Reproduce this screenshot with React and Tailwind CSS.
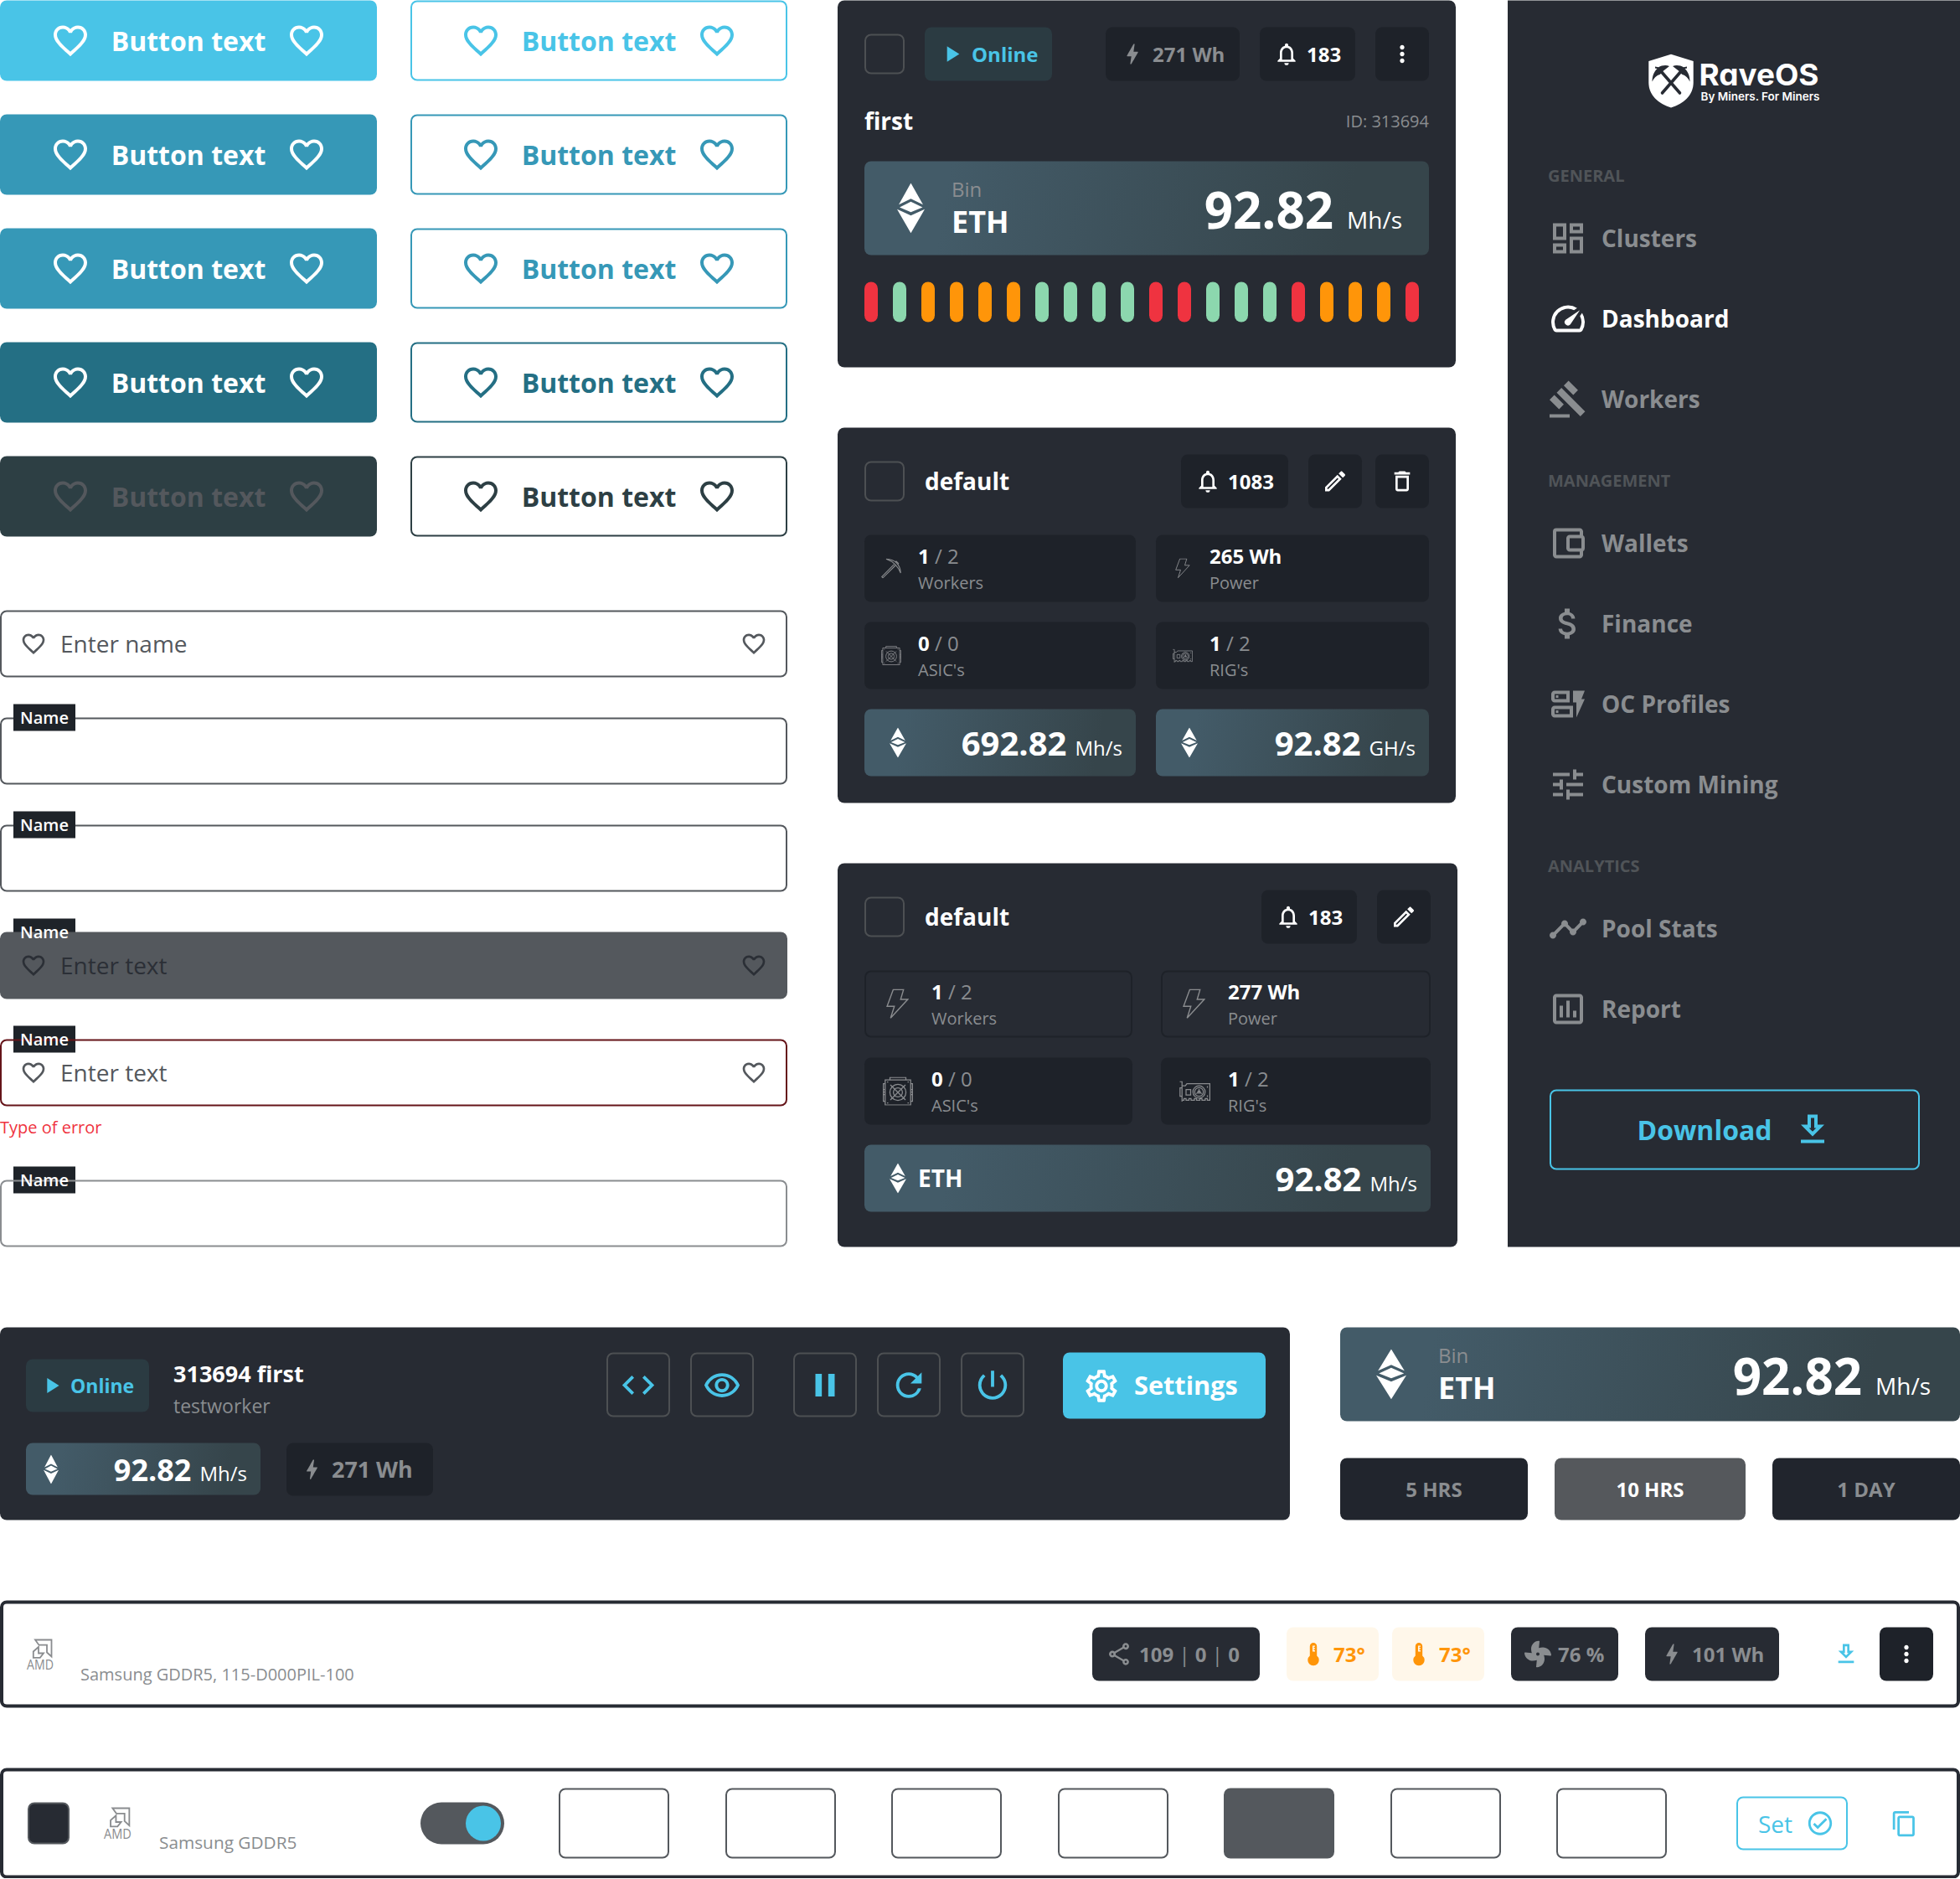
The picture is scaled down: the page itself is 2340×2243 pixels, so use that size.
import {
  MdFavoriteBorder,
  MdPlayArrow,
  MdBolt,
  MdNotificationsNone,
  MdMoreVert,
  MdOutlineEdit,
  MdDeleteOutline,
  MdOutlineDashboard,
  MdSpeed,
  MdGavel,
  MdAttachMoney,
  MdOutlineDynamicForm,
  MdTune,
  MdTimeline,
  MdOutlineAssessment,
  MdCode,
  MdOutlineRemoveRedEye,
  MdPause,
  MdRefresh,
  MdPowerSettingsNew,
  MdOutlineSettings,
  MdOutlineShare,
  MdContentCopy,
  MdOutlineCheckCircle,
} from "react-icons/md";
import { FaFan } from "react-icons/fa";

/* ---------- custom drawings ---------- */

function EthIcon({ className }) {
  return (
    <svg viewBox="0 0 32.5 60" preserveAspectRatio="none" fill="#fff" className={className}>
      <path d="M16.2 0 30.5 25.7 16.2 18.7 2 25.7Z" />
      <path d="M16.2 22.3 30 29 16.2 34.7 3 29Z" />
      <path d="M0 31.3 16.2 38.7 32.5 31.3 16.2 59.8Z" />
    </svg>
  );
}

function DownloadIcon({ className }) {
  return (
    <svg viewBox="0 0 24 24" fill="currentColor" className={className}>
      <path d="M19 9h-4V3H9v6H5l7 7 7-7zm-8 2V5h2v6h1.17L12 13.17 9.83 11H11zm-6 7h14v2H5z" />
    </svg>
  );
}

function WalletIcon({ className }) {
  return (
    <svg viewBox="0 0 24 24" fill="currentColor" className={className}>
      <path d="M21 7.28V5c0-1.1-.9-2-2-2H5a2 2 0 0 0-2 2v14c0 1.1.9 2 2 2h14c1.1 0 2-.9 2-2v-2.28A2 2 0 0 0 22 15V9a2 2 0 0 0-1-1.72zM20 9v6h-7V9h7zM5 19V5h14v2h-6c-1.1 0-2 .9-2 2v6c0 1.1.9 2 2 2h6v2H5z" />
    </svg>
  );
}

function ThermoIcon({ className }) {
  return (
    <svg viewBox="0 0 32 32" fill="currentColor" className={className}>
      <path
        fillRule="evenodd"
        d="M16 2.500a4.200 4.200 0 0 0-4.200 4.200v11.200a6.700 6.700 0 1 0 8.400 0V6.700A4.200 4.200 0 0 0 16 2.500ZM15 6h3v1.300h-1.500v1.500H18v1.300h-1.500v1.500H18V13h-3Z"
      />
    </svg>
  );
}

function PickIcon({ className }) {
  return (
    <svg viewBox="0 0 24 24" fill="none" stroke="#8a8c8f" strokeWidth="1.1" className={className}>
      <path d="M6 .7C12 1.2 16.5 3.5 18.5 5.5c2.2 2.3 4.5 6.5 4.8 12C21.5 13 19.5 10 16.8 7.3 14 4.5 11 2.5 6 .7Z" />
      <path d="M15.5 7.2.7 22l1.3 1.3L17 8.5" />
      <path d="m17 4.5 1-1 2.6 2.6-1 1" />
    </svg>
  );
}

function BoltOutline({ className }) {
  return (
    <svg viewBox="0 0 26.5 36" fill="none" stroke="#8a8c8f" strokeWidth="1.4" className={className}>
      <path d="M8.2.8h12.300L17 12.500h8.500L5 34.800l4.500-14.100H.8Z" />
    </svg>
  );
}

function AsicIcon({ className }) {
  return (
    <svg viewBox="0 0 36 34" fill="none" stroke="#8a8c8f" strokeWidth="1.25" className={className}>
      <path d="M2.800 3.500h30.400v30H2.800zM8.500 3.500V.6h19v2.900M2.800 8H.6v21h2.200M33.200 8h2.200v21h-2.200" />
      <path d="M5 6h1.500M29.500 6H31M5 31h1.500M29.500 31H31M.6 15h2M.6 18h2M.6 21h2M33.400 15h2M33.400 18h2M33.400 21h2" />
      <circle cx="18" cy="18.500" r="9.600" />
      <circle cx="18" cy="18.500" r="5.400" />
      <path d="m9 9.500 18 18M27 9.500l-18 18" />
    </svg>
  );
}

function GpuIcon({ className }) {
  return (
    <svg viewBox="0 0 37 25" fill="none" stroke="#8a8c8f" strokeWidth="1.25" className={className}>
      <path d="M.5.6h2.700V24.500M3.200 8H.8v10h2.400" />
      <path d="M3.200 5.600h4L9 3.200h27.400v19.600h-3v-2h-2.500v2H27v-2h-2.500v2h-4v-2H18v2h-4v-2h-2.500v2H8v-2H5.500v2H3.200" />
      <path d="M8 10h5.500v6.500H8z" />
      <circle cx="23.500" cy="13" r="7.300" />
      <circle cx="23.500" cy="13" r="5.200" />
      <path d="M23.500 13V9.500M23.500 13l-3.200 2M23.500 13l3.200 2M33.500 6v2M33.500 17v2" />
      <circle cx="23.500" cy="13" r="1.500" />
    </svg>
  );
}

function AmdIcon({ className }) {
  return (
    <svg viewBox="0 0 32 37" fill="none" stroke="#8a8c8f" strokeWidth="1.8" className={`overflow-visible ${className}`}>
      <path d="M10 1h19.500v20l-5.500-5V7.200h-9.500Z" />
      <path d="M14 9.500 7.800 15v7.300h8L20 17h-6Z" />
      <text x="0" y="36.600" fontFamily="Open Sans" fontSize="15.500" fontWeight="500" textLength="32" lengthAdjust="spacingAndGlyphs" fill="#8a8c8f" stroke="none">
        AMD
      </text>
    </svg>
  );
}

function Logo() {
  return (
    <svg viewBox="0 0 206 64" className="h-16 w-[206px] overflow-visible">
      <path d="M27 .3 53.700 8.500V34c0 15-11.700 25.500-26.700 30C12 59.500.3 49 .3 34V8.500Z" fill="#fff" />
      <g fill="none" stroke="#272b33" strokeWidth="3.600" strokeLinecap="round">
        <path d="m16.500 46.500 23-26.500M37.500 46.500l-23-26.500" />
      </g>
      <g fill="#272b33">
        <path d="M4.500 33C4.500 26 7 20.500 10.500 17.500l-2.500-.5V15l4 .8C16 13.500 21 12.800 25 14.500l-8 6.300-3 3.400C9.500 25.500 6.500 28.500 4.500 33Z" />
        <path d="M49.500 33c0-7-2.500-12.500-6-15.500l2.500-.5V15l-4 .8C38 13.500 33 12.800 29 14.500l8 6.300 3 3.400C44.500 25.500 47.500 28.500 49.500 33Z" />
      </g>
      <text x="60.500" y="37.200" fill="#fff" fontFamily="Inter" fontWeight="700" fontSize="35.500" textLength="143" lengthAdjust="spacingAndGlyphs" className="[font-feature-settings:'cv11']">
        RaveOS
      </text>
      <text x="62.500" y="55" fill="#fff" fontFamily="Inter" fontWeight="600" fontSize="13.300" textLength="142" lengthAdjust="spacingAndGlyphs">
        By Miners. For Miners
      </text>
    </svg>
  );
}

/* ---------- buttons and fields ---------- */

function Button({ className }) {
  return (
    <button className={`flex h-24 w-[450px] items-center justify-center gap-6 rounded-lg text-[32px] font-bold ${className}`}>
      <MdFavoriteBorder className="size-12" />
      <span className="w-[186px]">Button text</span>
      <MdFavoriteBorder className="size-12" />
    </button>
  );
}

function Field({ label, text, lineOnTop, className = "border-[#54585d] text-[#54585d]" }) {
  return (
    <div className="relative">
      {label && <div className={`absolute -top-4 left-4 h-8 w-[74px] bg-[#1e2329] ${lineOnTop ? "" : "z-10"}`} />}
      <div className={`relative flex h-20 items-center rounded-lg border-2 px-[22px] text-[28px] ${className}`}>
        {text && (
          <>
            <MdFavoriteBorder className="size-8" />
            <span className="ml-4 flex-1 pb-0.5">{text}</span>
            <MdFavoriteBorder className="size-8" />
          </>
        )}
      </div>
      {label && (
        <div className="absolute -top-4 left-4 z-20 h-8 w-[74px] text-center text-[20px] leading-8 font-semibold text-white">
          {label}
        </div>
      )}
    </div>
  );
}

/* ---------- cards ---------- */

function Checkbox() {
  return <div className="size-12 shrink-0 rounded-lg border-2 border-[#4d5053]" />;
}

function Chip({ icon: Icon, children, className }) {
  return (
    <div className={`flex h-16 items-center gap-2 rounded-lg px-4 text-[24px] font-bold ${className}`}>
      <Icon className="size-8 shrink-0" />
      {children && <span className="whitespace-nowrap">{children}</span>}
    </div>
  );
}

function Rate({ value, unit, big }) {
  return big ? (
    <div className="ml-auto flex items-baseline gap-4 pt-0.5">
      <span className="text-[60px] leading-[82px] font-bold">{value}</span>
      <span className="text-[28px]">{unit}</span>
    </div>
  ) : (
    <div className="ml-auto flex items-baseline gap-[10px]">
      <span className="text-[40px] leading-[54px] font-bold">{value}</span>
      <span className="text-[24px]">{unit}</span>
    </div>
  );
}

const gradient = "bg-linear-[100deg,#435b68_15%,#36454b_85%]";

function Stat({ icon: Icon, iconClass, boxClass, strong, rest, label, className }) {
  return (
    <div className={`flex h-20 items-center gap-4 rounded-lg ${className}`}>
      <div className={`flex items-center justify-center ${boxClass}`}>
        <Icon className={iconClass} />
      </div>
      <div className="flex flex-col pt-0.5 text-[#8a8d90]">
        <div className="text-[24px] leading-8">
          <span className="font-bold text-white">{strong}</span>
          {rest}
        </div>
        <div className="text-[20px] leading-8">{label}</div>
      </div>
    </div>
  );
}

const barColors = {
  r: "bg-[#ef3340]",
  g: "bg-[#8cd7ae]",
  o: "bg-[#ff9509]",
};

function WorkerCard() {
  return (
    <div className="flex h-[438px] w-[738px] flex-col rounded-lg bg-[#272b33] p-8 text-white">
      <div className="flex items-center gap-6">
        <Checkbox />
        <Chip icon={MdPlayArrow} className="w-[152px] bg-[#2b3b42] text-[#49c4e7]">Online</Chip>
        <Chip icon={MdBolt} className="ml-auto w-40 bg-[#1e2229] text-[#8a8d90]">271 Wh</Chip>
        <Chip icon={MdNotificationsNone} className="w-[114px] bg-[#1e2229]">183</Chip>
        <Chip icon={MdMoreVert} className="bg-[#1e2229]" />
      </div>
      <div className="mt-6 flex h-12 items-center justify-between">
        <span className="pb-0.5 text-[28px] font-bold">first</span>
        <span className="text-[20px] text-[#8a8d90]">ID: 313694</span>
      </div>
      <div className={`mt-6 flex h-28 items-center rounded-lg px-8 ${gradient}`}>
        <div className="flex w-[46px] justify-center">
          <EthIcon className="h-[60px] w-[33px]" />
        </div>
        <div className="ml-[26px] flex flex-col">
          <span className="text-[24px] leading-8 text-[#8a8d90]">Bin</span>
          <span className="text-[36px] leading-[46px] font-bold">ETH</span>
        </div>
        <Rate big value="92.82" unit="Mh/s" />
      </div>
      <div className="mt-8 flex gap-[18px]">
        {"rgooooggggrrgggrooor".split("").map((c, i) => (
          <div key={i} className={`h-12 w-4 rounded-full ${barColors[c]}`} />
        ))}
      </div>
    </div>
  );
}

function ClusterCard() {
  const box = "bg-[#1e2229] px-4";
  return (
    <div className="flex h-[448px] w-[738px] flex-col rounded-lg bg-[#272b33] p-8 text-white">
      <div className="flex items-center">
        <Checkbox />
        <span className="ml-6 pb-0.5 text-[28px] font-bold">default</span>
        <Chip icon={MdNotificationsNone} className="ml-auto w-32 bg-[#1e2229]">1083</Chip>
        <Chip icon={MdOutlineEdit} className="ml-6 bg-[#1e2229]" />
        <Chip icon={MdDeleteOutline} className="ml-4 bg-[#1e2229]" />
      </div>
      <div className="mt-8 grid grid-cols-[324px_326px] gap-6">
        <Stat icon={PickIcon} boxClass="size-8" iconClass="size-6" strong="1" rest=" / 2" label="Workers" className={box} />
        <Stat icon={BoltOutline} boxClass="size-8" iconClass="h-6 w-[18px]" strong="265 Wh" label="Power" className={box} />
        <Stat icon={AsicIcon} boxClass="size-8" iconClass="h-6 w-6" strong="0" rest=" / 0" label="ASIC's" className={box} />
        <Stat icon={GpuIcon} boxClass="size-8" iconClass="h-[17px] w-6" strong="1" rest=" / 2" label="RIG's" className={box} />
        <div className={`flex h-20 items-center rounded-lg pr-4 pl-[30px] ${gradient}`}>
          <EthIcon className="h-9 w-5" />
          <Rate value="692.82" unit="Mh/s" />
        </div>
        <div className={`flex h-20 items-center rounded-lg pr-4 pl-[30px] ${gradient}`}>
          <EthIcon className="h-9 w-5" />
          <Rate value="92.82" unit="GH/s" />
        </div>
      </div>
    </div>
  );
}

function ClusterCardWide() {
  const filled = "bg-[#1e2229] px-4";
  const outlined = "border-2 border-[#1e2229] px-[14px]";
  return (
    <div className="flex h-[458px] w-[740px] flex-col rounded-lg bg-[#272b33] p-8 text-white">
      <div className="flex items-center">
        <Checkbox />
        <span className="ml-6 pb-0.5 text-[28px] font-bold">default</span>
        <Chip icon={MdNotificationsNone} className="ml-auto w-[114px] bg-[#1e2229]">183</Chip>
        <Chip icon={MdOutlineEdit} className="ml-6 bg-[#1e2229]" />
      </div>
      <div className="mt-8 grid grid-cols-[320px_322px] gap-x-[34px] gap-y-6">
        <Stat icon={BoltOutline} boxClass="size-12 pr-0.5" iconClass="h-9 w-[27px]" strong="1" rest=" / 2" label="Workers" className={outlined} />
        <Stat icon={BoltOutline} boxClass="size-12 pr-0.5" iconClass="h-9 w-[27px]" strong="277 Wh" label="Power" className={outlined} />
        <Stat icon={AsicIcon} boxClass="size-12" iconClass="h-[34px] w-9" strong="0" rest=" / 0" label="ASIC's" className={filled} />
        <Stat icon={GpuIcon} boxClass="size-12" iconClass="h-[25px] w-[37px]" strong="1" rest=" / 2" label="RIG's" className={filled} />
        <div className={`col-span-2 flex h-20 items-center rounded-lg pr-4 pl-[30px] ${gradient}`}>
          <EthIcon className="h-9 w-5" />
          <span className="ml-[14px] pb-0.5 text-[28px] font-bold">ETH</span>
          <Rate value="92.82" unit="Mh/s" />
        </div>
      </div>
    </div>
  );
}

/* ---------- sidebar ---------- */

const sections = [
  {
    title: "GENERAL",
    items: [
      ["Clusters", MdOutlineDashboard],
      ["Dashboard", MdSpeed, true],
      ["Workers", MdGavel],
    ],
  },
  {
    title: "MANAGEMENT",
    items: [
      ["Wallets", WalletIcon],
      ["Finance", MdAttachMoney],
      ["OC Profiles", MdOutlineDynamicForm],
      ["Custom Mining", MdTune],
    ],
  },
  {
    title: "ANALYTICS",
    items: [
      ["Pool Stats", MdTimeline],
      ["Report", MdOutlineAssessment],
    ],
  },
];

function Sidebar() {
  return (
    <nav className="flex h-[1488px] w-[540px] flex-col bg-[#272b33] px-12 pt-16">
      <div className="flex h-16 pl-[120px]">
        <Logo />
      </div>
      <div className="mt-[67px] flex flex-col gap-[59px]">
        {sections.map((s) => (
          <div key={s.title}>
            <div className="h-7 text-[20px] leading-7 font-bold text-[#505458]">{s.title}</div>
            <div className="mt-[37px] flex flex-col gap-12">
              {s.items.map(([name, Icon, active]) => (
                <div key={name} className={`flex h-12 items-center gap-4 text-[28px] font-bold ${active ? "text-white" : "text-[#8a8d90]"}`}>
                  <Icon className="size-12" />
                  <span className="pb-0.5">{name}</span>
                </div>
              ))}
            </div>
          </div>
        ))}
      </div>
      <button className="mt-[72px] ml-0.5 flex h-24 w-[442px] items-center justify-center gap-6 rounded-lg border-2 border-[#49c4e7] text-[32px] font-bold text-[#49c4e7]">
        <span>Download</span>
        <DownloadIcon className="size-12" />
      </button>
    </nav>
  );
}

/* ---------- lower panels ---------- */

function Tool({ icon: Icon, className = "" }) {
  return (
    <div className={`flex h-[77px] w-[76px] items-center justify-center rounded-lg border-2 border-[#4d5053] text-[#49c4e7] ${className}`}>
      <Icon className="size-[46px]" />
    </div>
  );
}

function WorkerHeader() {
  return (
    <div className="flex h-[230px] w-[1540px] flex-col rounded-lg bg-[#272b33] pt-[30px] pr-[29px] pl-[31px] text-white">
      <div className="flex h-[80px]">
        <div className="mt-2 flex h-[63px] w-[147px] items-center gap-[7px] rounded-lg bg-[#2b3b42] pl-[15px] text-[23px] font-bold text-[#49c4e7]">
          <MdPlayArrow className="size-[31px]" />
          <span>Online</span>
        </div>
        <div className="mt-1 ml-[29px] flex flex-col">
          <span className="text-[27px] leading-[41px] font-bold">313694 first</span>
          <span className="text-[23px] leading-[37px] text-[#8a8d90]">testworker</span>
        </div>
        <div className="ml-auto flex">
          <Tool icon={MdCode} />
          <Tool icon={MdOutlineRemoveRedEye} className="ml-6" />
          <Tool icon={MdPause} className="ml-[47px]" />
          <Tool icon={MdRefresh} className="ml-6" />
          <Tool icon={MdPowerSettingsNew} className="ml-6" />
          <button className="ml-[46px] flex h-[79px] w-[242px] items-center rounded-lg bg-[#49c4e7] pl-[23px] text-[30.7px] font-bold">
            <MdOutlineSettings className="size-[46px]" />
            <span className="ml-4 pb-0.5">Settings</span>
          </button>
        </div>
      </div>
      <div className="mt-[28px] flex">
        <div className={`flex h-[62px] w-[280px] items-center rounded-lg pr-4 pl-[21px] ${gradient}`}>
          <EthIcon className="h-[35px] w-[18px]" />
          <div className="ml-auto flex items-baseline gap-[10px] pt-0.5">
            <span className="text-[36px] font-bold">92.82</span>
            <span className="text-[24px]">Mh/s</span>
          </div>
        </div>
        <div className="ml-[31px] flex h-[63px] w-[175px] items-center rounded-lg bg-[#1e2229] pl-[15px] text-[26.9px] font-bold text-[#8a8d90]">
          <MdBolt className="size-[31px]" />
          <span className="ml-2">271 Wh</span>
        </div>
      </div>
    </div>
  );
}

function RatePanel() {
  const tab = "flex h-[74px] items-center justify-center rounded-lg text-[24px] font-bold";
  return (
    <div className="flex w-[740px] flex-col justify-between">
      <div className={`flex h-28 items-center rounded-lg pr-[35px] pl-[43px] text-white ${gradient}`}>
        <EthIcon className="h-[60px] w-9" />
        <div className="ml-[38px] flex flex-col">
          <span className="text-[24px] leading-8 text-[#8a8d90]">Bin</span>
          <span className="text-[36px] leading-[46px] font-bold">ETH</span>
        </div>
        <Rate big value="92.82" unit="Mh/s" />
      </div>
      <div className="grid grid-cols-[224px_228px_224px] gap-8">
        <div className={`${tab} bg-[#21252d] text-[#8a8d90]`}>5 HRS</div>
        <div className={`${tab} bg-[#55585c] text-white`}>10 HRS</div>
        <div className={`${tab} bg-[#21252d] text-[#8a8d90]`}>1 DAY</div>
      </div>
    </div>
  );
}

function Bar() {
  return <span className="font-normal"> | </span>;
}

function GpuRow() {
  const dark = "bg-[#272b33] text-[#8a8d90]";
  const warm = "bg-[#fff7ea] text-[#ff9509]";
  return (
    <div className="flex h-32 items-center rounded-lg border-4 border-[#272b33] px-7">
      <AmdIcon className="h-[37px] w-8" />
      <span className="mt-12 ml-8 text-[20px] text-[#8a8d90]">Samsung GDDR5, 115-D000PIL-100</span>
      <Chip icon={MdOutlineShare} className={`ml-auto w-[200px] ${dark}`}>
        109<Bar />0<Bar />0
      </Chip>
      <Chip icon={ThermoIcon} className={`ml-8 w-[110px] ${warm}`}>73°</Chip>
      <Chip icon={ThermoIcon} className={`ml-4 w-[110px] ${warm}`}>73°</Chip>
      <Chip icon={FaFan} className={`ml-8 w-32 ${dark}`}>76 %</Chip>
      <Chip icon={MdBolt} className={`ml-8 w-40 ${dark}`}>101 Wh</Chip>
      <DownloadIcon className="ml-16 size-8 text-[#49c4e7]" />
      <Chip icon={MdMoreVert} className="ml-6 bg-[#1e2229] text-white" />
    </div>
  );
}

function TuneRow() {
  return (
    <div className="flex h-[132px] items-center rounded-lg border-4 border-[#272b33] pl-[29px]">
      <div className="size-[50px] rounded-lg border-2 border-[#54585d] bg-[#272b33]" />
      <AmdIcon className="ml-[41px] h-[38px] w-[33px]" />
      <span className="mt-[46px] ml-[33px] w-[312px] text-[20.8px] text-[#8a8d90]">Samsung GDDR5</span>
      <div className="flex h-[50px] w-[100px] items-center justify-end rounded-full bg-[#54585d] pr-1">
        <div className="size-[42px] rounded-full bg-[#49c4e7]" />
      </div>
      <div className="ml-[65px] flex w-[1323px] justify-between">
        {[0, 1, 2, 3, 4, 5, 6].map((i) => (
          <div key={i} className={`h-[84px] w-[132px] rounded-lg border-2 border-[#54585d] ${i === 4 ? "bg-[#54585d]" : ""}`} />
        ))}
      </div>
      <button className="ml-[83px] flex h-16 w-[133px] items-center rounded-lg border-2 border-[#49c4e7] pl-[24px] text-[28px] font-medium text-[#49c4e7]">
        <span>Set</span>
        <MdOutlineCheckCircle className="ml-4 size-[34px]" />
      </button>
      <MdContentCopy className="ml-[51px] size-[33px] text-[#49c4e7]" />
    </div>
  );
}

/* ---------- page ---------- */

export default function App() {
  return (
    <div className="h-[2242px] w-[2340px] translate-y-[0.5px] bg-white font-['Open_Sans',sans-serif]">
      <div className="flex h-[1488px]">
        <div className="w-[940px]">
          <div className="grid grid-cols-2 gap-10">
            <Button className="bg-[#49c4e7] text-white" />
            <Button className="border-2 border-[#49c4e7] text-[#49c4e7]" />
            <Button className="bg-[#3698b7] text-white" />
            <Button className="border-2 border-[#3698b7] text-[#3698b7]" />
            <Button className="bg-[#3698b7] text-white" />
            <Button className="border-2 border-[#3698b7] text-[#3698b7]" />
            <Button className="bg-[#246f84] text-white" />
            <Button className="border-2 border-[#246f84] text-[#246f84]" />
            <Button className="bg-[#2d3f44] text-[#54585d]" />
            <Button className="border-2 border-[#2d3f44] text-[#2d3f44]" />
          </div>
          <div className="mt-[88px] flex flex-col gap-12">
            <Field text="Enter name" />
            <Field label="Name" />
            <Field label="Name" />
            <Field label="Name" text="Enter text" lineOnTop className="border-[#54585d] bg-[#54585d] text-[#2b2f36]" />
            <div>
              <Field label="Name" text="Enter text" lineOnTop className="border-[#651419] text-[#54585d]" />
              <div className="mt-2 h-8 text-[20px] leading-[33px] text-[#ef3340]">Type of error</div>
            </div>
            <Field label="Name" lineOnTop className="border-[#8a8d90]" />
          </div>
        </div>
        <div className="ml-[60px] flex w-[740px] flex-col gap-[72px]">
          <WorkerCard />
          <ClusterCard />
          <ClusterCardWide />
        </div>
        <div className="ml-[60px]">
          <Sidebar />
        </div>
      </div>
      <div className="mt-24 flex h-[230px] justify-between">
        <WorkerHeader />
        <RatePanel />
      </div>
      <div className="mt-24">
        <GpuRow />
      </div>
      <div className="mt-[72px]">
        <TuneRow />
      </div>
    </div>
  );
}
